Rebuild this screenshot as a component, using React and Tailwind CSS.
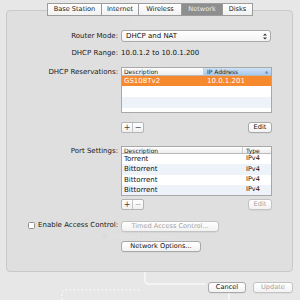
import React from "react";

const font = { fontFamily: '"DejaVu Sans", "Liberation Sans", sans-serif' };

function Tab({ label, width, active, last }) {
  return (
    <div
      className={`flex h-[13px] items-center justify-center border-y border-l border-[#9c9c9c] text-[6.6px] ${
        last ? "border-r" : ""
      } ${active ? "bg-[#8e8e8e] text-[#ececec]" : "bg-gradient-to-b from-white to-[#f1f1f1] text-[#1a1a1a]"}`}
      style={{ width }}
    >
      {label}
    </div>
  );
}

function Btn({ children, disabled, className = "" }) {
  return (
    <div
      className={`flex h-[11px] items-center justify-center rounded-[3px] border border-[#a9a9a9] bg-gradient-to-b from-white to-[#f2f2f2] text-[6.6px] shadow-[0_0.5px_0_rgba(0,0,0,0.08)] ${
        disabled ? "text-[#a3a3a3] border-[#c3c3c3]" : "text-[#111]"
      } ${className}`}
    >
      {children}
    </div>
  );
}

function PlusMinus({ minusDisabled }) {
  return (
    <div className="flex h-[11px] w-[23px] rounded-[2px] border border-[#b4b4b4] bg-gradient-to-b from-white to-[#f0f0f0] text-[8px] leading-none">
      <div className="flex w-[11px] items-center justify-center border-r border-[#c4c4c4] text-[#444]">+</div>
      <div className={`flex flex-1 items-center justify-center ${minusDisabled ? "text-[#b0b0b0]" : "text-[#444]"}`}>−</div>
    </div>
  );
}

function Row({ label, children, className = "" }) {
  return (
    <div className={`flex ${className}`}>
      <div className="w-[111px] pr-[0px] text-right text-[7px] text-[#1a1a1a]">{label}</div>
      <div className="ml-[3px] w-[151px]">{children}</div>
    </div>
  );
}

export default function App() {
  return (
    <div className="relative h-[300px] w-[300px] overflow-hidden bg-[#e7e7e7]" style={font}>
      <svg className="absolute inset-0" width="300" height="300" viewBox="0 0 300 300">
        <rect x="131" y="-10" width="30" height="232" rx="8" fill="#ffffff" opacity="0.16" />
        <circle cx="105" cy="236" r="2.5" fill="#9fd39a" opacity="0.5" />
        <text x="112" y="239" fontSize="7" fontWeight="bold" fill="#ffffff" opacity="0.35" fontFamily="DejaVu Sans">
          AirPort Extreme
        </text>
        <path d="M145 272 V280 Q145 284 149 284 H206" stroke="#ffffff" strokeWidth="1.5" fill="none" opacity="0.7" />
        <path d="M229 293 V300" stroke="#ffffff" strokeWidth="1.5" fill="none" opacity="0.7" />
        <path d="M62 300 V294 Q62 290 66 290 H140" stroke="#ffffff" strokeWidth="1.5" strokeDasharray="1.5 2.5" fill="none" opacity="0.8" />
      </svg>

      <div className="relative flex flex-col pt-[3px]">
        <div className="relative z-10 flex justify-center">
          <Tab label="Base Station" width={54} />
          <Tab label="Internet" width={37} />
          <Tab label="Wireless" width={43} />
          <Tab label="Network" width={41} active />
          <Tab label="Disks" width={31} last />
        </div>

        <div className="-mt-[6px] ml-[6px] h-[262px] w-[287px] rounded-[4px] border border-[#c9c9c9] bg-[#dddddd]/80 pt-[19px]">
          <Row label="Router Mode:" className="h-[12px] items-center">
            <div className="flex h-[12px] w-[150px] items-center justify-between rounded-[3px] border border-[#a9a9a9] bg-gradient-to-b from-white to-[#f3f3f3] pl-[4px] pr-[3px] text-[7px] text-[#111]">
              <span>DHCP and NAT</span>
              <svg width="4" height="7" viewBox="0 0 4 7">
                <path d="M0 2.6 L2 0.4 L4 2.6 Z M0 4.4 L2 6.6 L4 4.4 Z" fill="#333" />
              </svg>
            </div>
          </Row>

          <Row label="DHCP Range:" className="mt-[6px] h-[10px] items-center">
            <div className="text-[7px] text-[#111]">10.0.1.2 to 10.0.1.200</div>
          </Row>

          <Row label="DHCP Reservations:" className="mt-[9px]">
            <div className="h-[46px] w-[151px] overflow-hidden border border-[#a8a8a8] bg-white">
              <div className="flex h-[8px] border-b border-[#b9b9b9] text-[6px] leading-[8px] text-[#222]">
                <div className="w-[82px] border-r border-[#cfcfcf] bg-gradient-to-b from-white to-[#ededed] pl-[2px]">Description</div>
                <div className="flex flex-1 items-center justify-between bg-gradient-to-b from-[#cfe2f6] to-[#a7c8ec] pl-[3px] pr-[3px]">
                  <span>IP Address</span>
                  <span className="text-[4px] text-[#6b86a8]">▲</span>
                </div>
              </div>
              <div className="flex h-[10px] items-center bg-[#f6882d] text-[7px] text-white">
                <div className="w-[82px] pl-[2px]">GS108Tv2</div>
                <div className="pl-[3px]">10.0.1.201</div>
              </div>
              <div className="h-[11px] bg-white" />
              <div className="h-[11px] bg-[#eef3fa]" />
              <div className="h-[11px] bg-white" />
            </div>
          </Row>

          <Row label="" className="mt-[9px] h-[11px]">
            <div className="flex justify-between">
              <PlusMinus />
              <Btn className="w-[24px]">Edit</Btn>
            </div>
          </Row>

          <Row label="Port Settings:" className="mt-[13px]">
            <div className="h-[50px] w-[151px] overflow-hidden border border-[#a8a8a8] bg-white">
              <div className="flex h-[7px] border-b border-[#b9b9b9] bg-gradient-to-b from-white to-[#ededed] text-[6px] leading-[7px] text-[#222]">
                <div className="w-[121px] border-r border-[#cfcfcf] pl-[2px]">Description</div>
                <div className="pl-[3px]">Type</div>
              </div>
              {["Torrent", "Bittorrent", "Bittorrent", "Bittorrent"].map((name, i) => (
                <div
                  key={i}
                  className={`flex h-[10.3px] items-center text-[7px] text-[#111] ${i % 2 ? "bg-[#eef3fa]" : "bg-white"}`}
                >
                  <div className="w-[122px] pl-[2px]">{name}</div>
                  <div className="pl-[2px] text-[6.5px]">IPv4</div>
                </div>
              ))}
            </div>
          </Row>

          <Row label="" className="mt-[3px] h-[11px]">
            <div className="flex justify-between">
              <PlusMinus minusDisabled />
              <Btn disabled className="w-[24px]">Edit</Btn>
            </div>
          </Row>

          <Row
            label={
              <span className="inline-flex items-center">
                <span className="mr-[3px] inline-block h-[7px] w-[7px] rounded-[1.5px] border border-[#8f8f8f] bg-white" />
                Enable Access Control:
              </span>
            }
            className="mt-[11px] h-[11px] items-center"
          >
            <Btn disabled className="w-[98px]">Timed Access Control...</Btn>
          </Row>

          <Row label="" className="mt-[9px] h-[11px]">
            <Btn className="w-[80px]">Network Options...</Btn>
          </Row>
        </div>

        <div className="mt-[10px] flex justify-end pr-[7px]">
          <Btn className="w-[38px]">Cancel</Btn>
          <Btn disabled className="ml-[7px] w-[40px]">Update</Btn>
        </div>
      </div>
    </div>
  );
}
